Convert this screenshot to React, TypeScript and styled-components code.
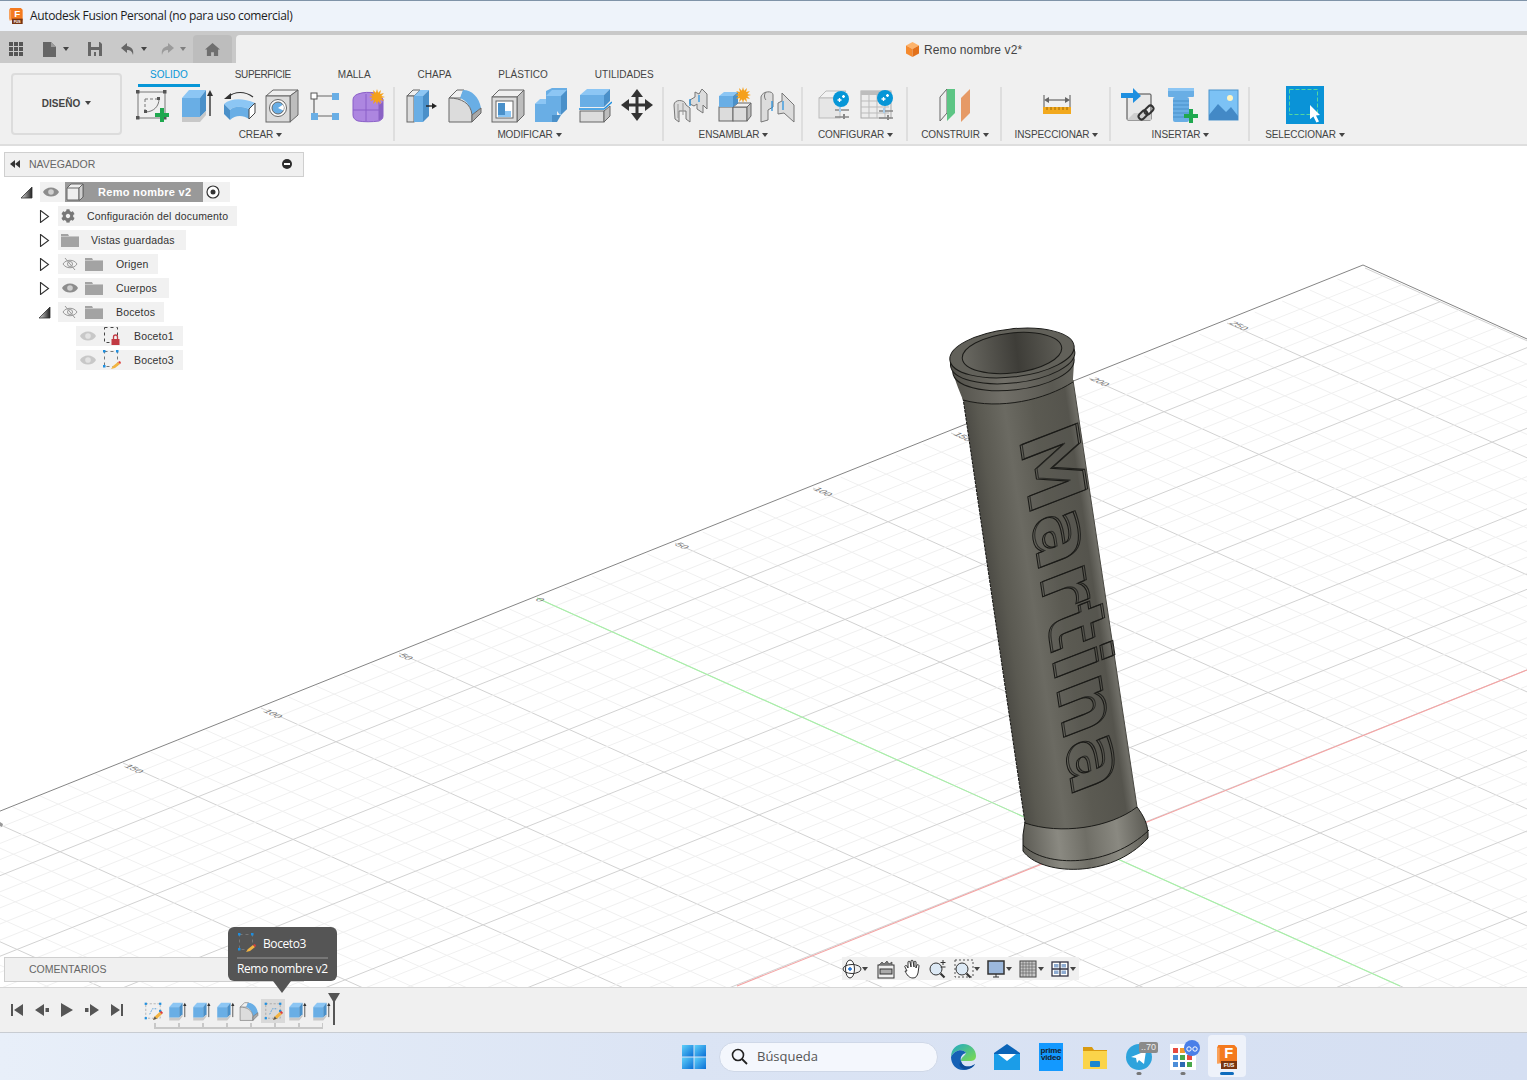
import React from 'react'
import styled, { createGlobalStyle } from 'styled-components'
import { FaCog } from 'react-icons/fa'

const GlobalStyle = createGlobalStyle`
  html, body {
    margin: 0;
    padding: 0;
    background: #fff;
    font-family: "Liberation Sans", Arial, sans-serif;
  }
`

// ---------- icons ----------

const Svg = styled.svg<{ $s?: number }>`
  display: block;
  flex: none;
  width: ${(p) => p.$s ?? 36}px;
  height: ${(p) => p.$s ?? 36}px;
`

type IconProps = { s?: number }
const Ico = ({ s, children }: IconProps & { children: React.ReactNode }) => (
  <Svg $s={s} viewBox="0 0 36 36">
    {children}
  </Svg>
)

const BLUE = '#69aee5'
const LIGHT = '#8cc6f4'
const DEEP = '#4a90c9'
const GREY = '#dcdcdc'
const LINE = '#666'

const Plus = ({ x, y }: { x: number; y: number }) => (
  <path d={`M${x - 2} ${y - 7}h4v5h5v4h-5v5h-4v-5h-5v-4h5z`} fill="#1fa84f" />
)

const Star = ({ x, y, r = 8 }: { x: number; y: number; r?: number }) => {
  const pts = Array.from({ length: 24 }, (_, i) => {
    const a = (i * Math.PI) / 12
    const d = i % 2 ? r * 0.55 : r
    return `${(x + d * Math.cos(a)).toFixed(1)},${(y + d * Math.sin(a)).toFixed(1)}`
  })
  return <polygon points={pts.join(' ')} fill="#f5a11c" />
}

const SketchCreate = ({ s }: IconProps) => (
  <Ico s={s}>
    <rect x="3" y="5" width="27" height="26" fill="none" stroke="#777" />
    {[[1, 3], [28, 3], [1, 29], [28, 29]].map(([x, y]) => (
      <rect key={`${x}${y}`} x={x} y={y} width="3.5" height="3.5" fill="#555" />
    ))}
    <path d="M10 12h14M10 12v13" stroke="#777" strokeDasharray="3 2" fill="none" />
    <path d="M24 12c0 7-5 13-14 13" stroke="#777" fill="none" />
    <rect x="9" y="23" width="3" height="3" fill="#555" />
    <rect x="22" y="10" width="3" height="3" fill="#555" />
    <Plus x={27} y={28} />
  </Ico>
)

const SketchEdit = ({ s }: IconProps) => (
  <Ico s={s}>
    <rect x="5" y="5" width="26" height="26" fill="none" stroke="#888" strokeDasharray="4 3" />
    {[[3, 3], [29, 3], [3, 29], [29, 16]].map(([x, y]) => (
      <rect key={`${x}${y}`} x={x} y={y} width="4" height="4" fill="#1e8fe0" />
    ))}
    <path d="M12 24l5-10h9" stroke="#4a9bdc" strokeDasharray="3 2" fill="none" strokeWidth="1.6" />
    <path d="M18 34l3-6 9-8 4 4-9 8z" fill="#f2b441" />
    <path d="M30 20l3-2 3 3-2 3z" fill="#dd3c3c" />
    <path d="M18 34l3-6 4 4z" fill="#5a5a5a" />
  </Ico>
)

const Extrude = ({ s }: IconProps) => (
  <Ico s={s}>
    <polygon points="4,11 22,11 22,30 4,30" fill={BLUE} />
    <polygon points="4,11 11,3 28,3 22,11" fill={LIGHT} />
    <polygon points="22,11 28,3 28,24 22,30" fill={DEEP} />
    <polygon points="4,30 22,30 28,24 28,28 22,35 4,35" fill="#c8c8c8" />
    <path d="M32 29V6" stroke="#333" strokeWidth="1.4" />
    <polygon points="32,3 35,9 29,9" fill="#333" />
  </Ico>
)

const Revolve = () => (
  <Ico>
    <path d="M3 17C10 11 22 11 34 16L28 22C20 19 13 19 9 23Z" fill={LIGHT} />
    <path d="M9 23C13 19 20 19 28 22V32C22 28 14 28 9 33Z" fill={BLUE} />
    <path d="M3 17L9 23V33L3 27Z" fill={DEEP} />
    <path d="M28 22L34 16V26L28 32Z" fill="#fff" stroke="#444" />
    <path d="M7 10C14 4 24 4 32 10" stroke="#333" strokeWidth="1.2" fill="none" />
    <polygon points="3,12 10,6 10,12" fill="#333" />
  </Ico>
)

const Hole = () => (
  <Ico>
    <polygon points="2,9 9,3 34,3 26,9" fill="#efefef" stroke={LINE} />
    <polygon points="26,9 34,3 34,28 26,35" fill="#bdbdbd" stroke={LINE} />
    <rect x="2" y="9" width="24" height="26" fill={GREY} stroke={LINE} />
    <circle cx="14" cy="21" r="8.5" fill="#fff" stroke={LINE} />
    <circle cx="14" cy="21" r="6" fill={BLUE} stroke={LINE} />
    <path d="M14 21l5 -3.5a6 6 0 0 1 .5 6z" fill="#fff" />
  </Ico>
)

const SketchRect = () => (
  <Ico>
    <path d="M10 9h15M7 12v14M11 29h14" stroke="#666" strokeWidth="1.2" />
    <rect x="4" y="6" width="6" height="6" fill="#fff" stroke="#555" />
    <rect x="25" y="6" width="7" height="7" fill={BLUE} />
    <rect x="4" y="26" width="7" height="7" fill={BLUE} />
    <rect x="25" y="26" width="7" height="7" fill={BLUE} />
  </Ico>
)

const FormIcon = () => (
  <Ico>
    <path d="M8 7c5-2 12-2 17-1l8 6v17c0 3-2 4-4 5-7 1-15 1-21 0-3-1-5-3-5-6V13c0-3 2-5 5-6z" fill="#ad86e0" stroke="#8a5fc8" />
    <path d="M3 23h26M16 7v27M29 14v19" stroke="#8a5fc8" fill="none" />
    <path d="M29 18l4-3v14c0 2-2 4-4 4z" fill="#8a62c4" />
    <Star x={27} y={10} />
  </Ico>
)

const PressPull = () => (
  <Ico>
    <polygon points="3,9 9,3 16,3 10,9" fill="#eee" stroke={LINE} />
    <rect x="3" y="9" width="7" height="26" fill={GREY} stroke={LINE} />
    <polygon points="10,9 16,3 25,3 19,9" fill={LIGHT} />
    <rect x="10" y="9" width="9" height="26" fill={BLUE} />
    <polygon points="19,9 25,3 25,29 19,35" fill={DEEP} />
    <path d="M22 19h8" stroke="#222" strokeWidth="1.4" />
    <polygon points="33,19 28,16 28,22" fill="#222" />
  </Ico>
)

const Fillet = ({ s }: IconProps) => (
  <Ico s={s}>
    <path d="M2 11L10 3H17L14 11Z" fill="#efefef" stroke={LINE} />
    <path d="M16 3C25 3 32 10 34 21L25 28C24 20 20 14 13 11Z" fill={BLUE} />
    <path d="M2 35V11C14 11 24 16 25 28V35Z" fill={GREY} stroke={LINE} />
    <path d="M25 28L34 21V26L25 35Z" fill="#a9a9a9" stroke={LINE} />
  </Ico>
)

const Shell = () => (
  <Ico>
    <polygon points="2,10 9,3 34,3 27,10" fill="#efefef" stroke={LINE} />
    <polygon points="27,10 34,3 34,28 27,35" fill="#bdbdbd" stroke={LINE} />
    <rect x="2" y="10" width="25" height="25" fill={GREY} stroke={LINE} />
    <rect x="6" y="14" width="17" height="17" fill="#fff" stroke={LINE} />
    <polygon points="8,16 15,16 15,24 21,24 21,30 8,30" fill={DEEP} />
    <polygon points="15,24 21,24 21,30 8,30 8,28 15,28" fill={LIGHT} />
  </Ico>
)

const Combine = () => (
  <Ico>
    <polygon points="13,13 13,4 19,1 34,1 34,22 27,28 24,24 24,35 2,35 2,17 7,13" fill={BLUE} />
    <polygon points="13,9 19,3 34,3 28,9" fill={LIGHT} />
    <polygon points="28,9 34,3 34,22 28,28" fill={DEEP} />
    <polygon points="2,17 7,12 13,12 13,17" fill={LIGHT} />
    <polygon points="19,28 28,28 24,35 19,35" fill={DEEP} />
  </Ico>
)

const Split = () => (
  <Ico>
    <rect x="4" y="8" width="24" height="12" fill={BLUE} />
    <polygon points="4,8 11,2 34,2 28,8" fill={LIGHT} />
    <polygon points="28,8 34,2 34,14 28,20" fill={DEEP} />
    <rect x="4" y="24" width="24" height="11" fill={GREY} stroke={LINE} />
    <polygon points="28,24 34,19 34,29 28,35" fill="#bdbdbd" stroke={LINE} />
    <path d="M3 22H28L36 15" stroke="#1e8fe0" strokeWidth="1.4" fill="none" />
  </Ico>
)

const MoveIcon = () => (
  <Ico>
    <path d="M16.500 8h3v8.500H28v3h-8.500V28h-3v-8.500H8v-3h8.500z" fill="#333" />
    <polygon points="18,2 24,10 12,10" fill="#333" />
    <polygon points="18,34 24,26 12,26" fill="#333" />
    <polygon points="2,18 10,12 10,24" fill="#333" />
    <polygon points="34,18 26,12 26,24" fill="#333" />
  </Ico>
)

const JointIcon = () => (
  <Ico>
    <path d="M1 18c0-6 11-6 12 0l4 3v14l-4-3v-8H6v11l-4-3z" fill={GREY} stroke="#777" />
    <path d="M5 17v14M10 16v12" stroke="#999" />
    <path d="M17 13l5-3V5l4 2 3-5 5 5v15l-4-4v8l-6-4v-5l-3 2-4-2z" fill={GREY} stroke="#777" />
    <path d="M17 12v7M26 8v7" stroke="#1e8fe0" strokeWidth="1.2" />
  </Ico>
)

const NewComponent = () => (
  <Ico>
    <rect x="3" y="20" width="14" height="14" fill={GREY} stroke={LINE} />
    <rect x="17" y="20" width="14" height="14" fill={GREY} stroke={LINE} />
    <polygon points="17,20 22,16 35,16 31,20" fill="#efefef" stroke={LINE} />
    <polygon points="31,20 35,16 35,29 31,34" fill="#bdbdbd" stroke={LINE} />
    <rect x="3" y="9" width="14" height="11" fill={BLUE} />
    <polygon points="3,9 8,5 22,5 17,9" fill={LIGHT} />
    <polygon points="17,9 22,5 22,16 17,20" fill={DEEP} />
    <Star x={27} y={8} />
  </Ico>
)

const AsBuiltJoint = () => (
  <Ico>
    <path d="M2 10c1-6 12-7 12-2v12l-5 3v10l-7 2z" fill={GREY} stroke="#777" />
    <path d="M7 5c-2 2-2 6 0 8" stroke="#777" fill="none" />
    <path d="M19 16l4-2V6l12 12v17l-10-9-6 1z" fill={GREY} stroke="#777" />
    <path d="M24 14v9M13 14v10" stroke="#1e8fe0" strokeWidth="1.2" />
  </Ico>
)

const Badge = ({ x, y }: { x: number; y: number }) => (
  <g>
    <circle cx={x} cy={y} r="8" fill="#0696d7" />
    <path d={`M${x - 3.5} ${y + 1}h4M${x - 1.5} ${y - 1}v4M${x + 1} ${y - 2.5}h3M${x + 2.5} ${y - 4}v3`} stroke="#fff" strokeWidth="1.3" />
  </g>
)

const Sliders = ({ x, y }: { x: number; y: number }) => (
  <g>
    <path d={`M${x} ${y}h14M${x} ${y + 7}h14`} stroke="#888" strokeWidth="1.4" />
    <rect x={x + 4} y={y - 3} width="2" height="5" fill="#a9cdea" />
    <rect x={x + 8} y={y + 4} width="2" height="5" fill="#888" />
  </g>
)

const ChangeParams = () => (
  <Ico>
    <polygon points="3,11 10,4 30,4 24,11" fill="#f2f2f2" stroke="#bbb" />
    <rect x="3" y="11" width="21" height="20" fill="#e6e6e6" stroke="#bbb" />
    <Badge x={25} y={12} />
    <Sliders x={19} y={23} />
  </Ico>
)

const ConfigTable = () => (
  <Ico>
    <rect x="2" y="4" width="30" height="27" fill="#ececec" stroke="#aaa" />
    <rect x="2" y="4" width="30" height="4" fill="#bdbdbd" />
    <path d="M2 14h28M2 20h28M2 26h28M10 8v23M18 8v23M26 8v23" stroke="#bbb" />
    <Badge x={26} y={11} />
    <Sliders x={20} y={24} />
  </Ico>
)

const PlaneIcon = () => (
  <Ico>
    <polygon points="3,10 10,2 10,26 3,34" fill="#eee" stroke={LINE} />
    <polygon points="10,2 18,2 18,26 10,34" fill="#5dc584" />
    <polygon points="24,11 33,2 33,26 24,35" fill="#e69a66" />
  </Ico>
)

const Measure = () => (
  <Ico>
    <path d="M5 8v15M31 8v15" stroke="#555" />
    <path d="M8 13h20" stroke="#666" strokeWidth="1.2" />
    <polygon points="5,13 10,10 10,16" fill="#666" />
    <polygon points="31,13 26,10 26,16" fill="#666" />
    <rect x="4" y="20" width="28" height="7" fill="#f2a91e" />
    <path d="M8 20v3M12 20v3M16 20v3M20 20v3M24 20v3M28 20v3" stroke="#a06a00" />
  </Ico>
)

const InsertDerive = () => (
  <Ico>
    <rect x="7" y="7" width="24" height="26" rx="1" fill="#e8e8e8" stroke="#444" />
    <polygon points="7,33 14,26 31,26 31,33" fill="#cfcfcf" />
    <path d="M1 6h12V1l8 8-8 7v-5H1z" fill="#1e8fe0" />
    <g fill="none" stroke="#333" strokeWidth="2">
      <rect x="18" y="25" width="10" height="6" rx="3" transform="rotate(-45 23 28)" />
      <rect x="24" y="20" width="10" height="6" rx="3" transform="rotate(-45 29 23)" />
    </g>
  </Ico>
)

const BoltIcon = () => (
  <Ico>
    <rect x="5" y="1" width="26" height="9" rx="1" fill={BLUE} />
    <rect x="5" y="1" width="26" height="3" fill={LIGHT} />
    <rect x="10" y="10" width="16" height="25" rx="2" fill={BLUE} />
    <path d="M10 14h16M10 18h16M10 22h16M10 26h16M10 30h14" stroke={DEEP} />
    <Plus x={28} y={29} />
  </Ico>
)

const ImageIcon = () => (
  <Ico>
    <rect x="3" y="3" width="29" height="30" fill="#7cc2f5" stroke="#4d94cc" />
    <circle cx="24" cy="11" r="3" fill="#fff4c0" />
    <path d="M3 28l9-11 8 8 5-5 7 9v4H3z" fill="#4389c6" />
  </Ico>
)

const SelectIcon = () => (
  <Svg $s={38} viewBox="0 0 38 38">
    <rect width="38" height="38" fill="#0a93d7" />
    <rect x="3.5" y="3.5" width="28" height="25" fill="none" stroke="#54d6a0" strokeDasharray="4 2" />
    <path d="M24 19l10 10-4 .6 3 6-2.6 1-3-6-3.400 2.600z" fill="#fff" />
  </Svg>
)

const GridDots = () => (
  <Svg $s={14} viewBox="0 0 14 14">
    {[0, 5, 10].flatMap((x) =>
      [0, 5, 10].map((y) => <rect key={`${x}-${y}`} x={x} y={y} width="4" height="4" fill="#555" />),
    )}
  </Svg>
)

const FileIcon = () => (
  <Svg $s={15} viewBox="0 0 15 15">
    <path d="M1 0h8l5 5v10H1z" fill="#666" />
    <path d="M9 0l5 5H9z" fill="#9a9a9a" />
  </Svg>
)

const SaveIcon = () => (
  <Svg $s={14} viewBox="0 0 14 14">
    <path d="M0 0h12l2 2v12H0z" fill="#666" />
    <rect x="3" y="0" width="8" height="5" fill="#c9c9c9" />
    <rect x="3" y="8" width="8" height="6" fill="#c9c9c9" />
    <rect x="6" y="10" width="2" height="4" fill="#666" />
  </Svg>
)

const ArrowBack = ({ flip, color }: { flip?: boolean; color: string }) => (
  <Svg $s={14} viewBox="0 0 14 14" style={flip ? { transform: 'scaleX(-1)' } : undefined}>
    <path d="M6 1L0 6l6 5V8c3 0 5 1 6 5 1-5-1-8-6-9z" fill={color} />
  </Svg>
)

const HomeIcon = () => (
  <Svg $s={15} viewBox="0 0 16 16">
    <path d="M8 1l8 7h-2v7H9.500v-4h-3v4H2V8H0z" fill="#6f6f6f" />
  </Svg>
)

const Cube = () => (
  <Svg $s={15} viewBox="0 0 15 15">
    <polygon points="7.500,0 14,3.500 7.500,7 1,3.500" fill="#fdb36b" />
    <polygon points="1,3.500 7.500,7 7.500,15 1,11.500" fill="#f58a2e" />
    <polygon points="14,3.500 7.500,7 7.500,15 14,11.500" fill="#e2701a" />
  </Svg>
)

const FusionLogo = ({ s = 15 }: IconProps) => (
  <Svg $s={s} viewBox="0 0 30 36">
    <path d="M0 4l2-4h24l4 4v24H6L0 24z" fill="#f47a1f" />
    <path d="M0 4h4v24H0z" fill="#f9a15a" />
    <rect x="6" y="24" width="24" height="12" fill="#7a3510" />
    <text x="11" y="20" fontSize="22" fontWeight="700" fill="#fff" fontFamily="Liberation Sans, sans-serif">F</text>
    <text x="10" y="33" fontSize="8" fontWeight="700" fill="#fff" fontFamily="Liberation Sans, sans-serif">FUS</text>
  </Svg>
)

const Eye = ({ off, faint }: { off?: boolean; faint?: boolean }) => (
  <Svg $s={16} viewBox="0 0 16 16" style={faint ? { opacity: 0.4 } : undefined}>
    {off ? (
      <>
        <path d="M1 8c3-5 11-5 14 0-3 5-11 5-14 0z" fill="none" stroke="#999" />
        <circle cx="8" cy="8" r="2.500" fill="none" stroke="#999" />
        <path d="M3 2l10 12" stroke="#999" />
      </>
    ) : (
      <>
        <path d="M0 8c3-6 13-6 16 0-3 6-13 6-16 0z" fill="#8d8d8d" />
        <circle cx="8" cy="8" r="2.800" fill="#cfcfcf" />
      </>
    )}
  </Svg>
)

const FolderIcon = () => (
  <Svg $s={18} viewBox="0 0 18 14">
    <path d="M0 1h7l1 2h10v11H0z" fill="#a3a3a3" />
    <rect x="0" y="3" width="18" height="1" fill="#c6c6c6" />
  </Svg>
)

const BodyCube = () => (
  <Svg $s={18} viewBox="0 0 18 18">
    <path d="M1 5l4-4h12v13l-3 3H1z" fill="#eee" stroke="#666" />
    <path d="M1 5h12v12M13 5l4-4" fill="none" stroke="#666" />
    <path d="M13 5l4-4v13l-3 3h-1z" fill="#cfcfcf" stroke="#666" />
  </Svg>
)

const SketchLocked = () => (
  <Svg $s={20} viewBox="0 0 20 20">
    <rect x="2.500" y="1.500" width="13" height="15" fill="none" stroke="#444" strokeDasharray="3 3" />
    <path d="M11.500 13v-2a2 2 0 0 1 4 0v2" fill="none" stroke="#c23a43" strokeWidth="1.300" />
    <rect x="9.500" y="13" width="8" height="6" fill="#c23a43" />
  </Svg>
)

const SketchPencil = () => (
  <Svg $s={20} viewBox="0 0 20 20">
    <rect x="2.500" y="1.500" width="13" height="15" fill="none" stroke="#777" strokeDasharray="3 3" />
    <rect x="1" y="0" width="2.500" height="2.500" fill="#1e8fe0" />
    <rect x="14" y="0" width="2.500" height="2.500" fill="#1e8fe0" />
    <rect x="1" y="15" width="2.500" height="2.500" fill="#1e8fe0" />
    <path d="M9 19l2-3 5-4 2 2-5 4z" fill="#f2b441" />
    <path d="M16 12l2-1 1 2-1 1z" fill="#dd3c3c" />
  </Svg>
)

const TargetIcon = () => (
  <Svg $s={14} viewBox="0 0 14 14">
    <circle cx="7" cy="7" r="6" fill="#fff" stroke="#333" strokeWidth="1.200" />
    <circle cx="7" cy="7" r="2.500" fill="#333" />
  </Svg>
)

const TreeOpen = () => (
  <Svg $s={13} viewBox="0 0 13 13">
    <defs>
      <linearGradient id="tri" x1="0" x2="1" y1="0" y2="0">
        <stop offset="0" stopColor="#ddd" />
        <stop offset="1" stopColor="#222" />
      </linearGradient>
    </defs>
    <polygon points="1,12 12,1 12,12" fill="url(#tri)" stroke="#333" strokeWidth=".8" />
  </Svg>
)

const TreeClosed = () => (
  <Svg $s={13} viewBox="0 0 13 13">
    <polygon points="2.500,.500 10.500,6.500 2.500,12.500" fill="#fff" stroke="#333" strokeWidth="1.100" />
  </Svg>
)

const RewindIcon = () => (
  <Svg $s={10} viewBox="0 0 10 8">
    <polygon points="0,4 5,0 5,8" fill="#333" />
    <polygon points="5,4 10,0 10,8" fill="#333" />
  </Svg>
)

const MinusCircle = () => (
  <Svg $s={10} viewBox="0 0 10 10">
    <circle cx="5" cy="5" r="5" fill="#2b2b2b" />
    <rect x="2" y="4" width="6" height="2" fill="#fff" />
  </Svg>
)

const FirstBtn = () => (
  <Svg $s={14} viewBox="0 0 14 14">
    <path d="M1 1h2v12H1zM13 1v12L4 7z" fill="#555" />
  </Svg>
)
const PrevBtn = () => (
  <Svg $s={14} viewBox="0 0 14 14">
    <path d="M9 1v12L0 7zM10.500 5H14v4h-3.500z" fill="#555" />
  </Svg>
)
const PlayBtn = () => (
  <Svg $s={14} viewBox="0 0 14 14">
    <path d="M1 0l12 7-12 7z" fill="#555" />
  </Svg>
)
const NextBtn = () => (
  <Svg $s={14} viewBox="0 0 14 14">
    <path d="M5 1v12l9-6zM0 5h3.500v4H0z" fill="#555" />
  </Svg>
)
const LastBtn = () => (
  <Svg $s={14} viewBox="0 0 14 14">
    <path d="M1 1v12l9-6zM11 1h2v12h-2z" fill="#555" />
  </Svg>
)

const OrbitIcon = () => (
  <Svg $s={20} viewBox="0 0 20 20">
    <ellipse cx="8" cy="10" rx="4.500" ry="9" fill="#fff" stroke="#333" />
    <ellipse cx="10" cy="10" rx="9" ry="4.500" fill="none" stroke="#333" />
    <path d="M6 10h4M8 8v4" stroke="#1e6fd0" strokeWidth="1.400" />
  </Svg>
)
const LookIcon = () => (
  <Svg $s={20} viewBox="0 0 20 20">
    <rect x="2" y="6" width="16" height="13" fill="#eee" stroke="#333" />
    <rect x="4" y="10" width="12" height="5" fill="#aaa" stroke="#333" />
    <path d="M3 6l3-3 2 2 3-3 2 3 3-2v3" fill="#777" stroke="#333" strokeWidth=".6" />
  </Svg>
)
const HandIcon = () => (
  <Svg $s={20} viewBox="0 0 20 20">
    <path d="M5 12L3 8c-1-1 1-2 2-1l1 2V3c0-1 2-1 2 0l1 5V2c0-1 2-1 2 0l1 6V3c0-1 2-1 2 0v6l1-3c1-1 2 0 2 1l-1 7c-1 3-2 5-5 5-4 0-6-3-8-7z" fill="#fff" stroke="#333" />
  </Svg>
)
const ZoomIcon = ({ plus }: { plus?: boolean }) => (
  <Svg $s={20} viewBox="0 0 20 20">
    <circle cx="8" cy="10" r="6" fill="#dce9f5" stroke="#333" />
    <path d="M12.500 14.500l4 4" stroke="#333" strokeWidth="2.200" />
    {plus ? (
      <path d="M15 1v5M12.500 3.500h5M12.500 8h5" stroke="#333" />
    ) : (
      <rect x="1" y="1" width="18" height="17" fill="none" stroke="#555" strokeDasharray="2 2" />
    )}
  </Svg>
)
const DisplayIcon = () => (
  <Svg $s={20} viewBox="0 0 20 20">
    <rect x="2" y="2" width="16" height="13" fill="#9cb8dc" stroke="#333" strokeWidth="1.500" />
    <path d="M7 18h6M10 15v3" stroke="#333" />
  </Svg>
)
const GridIcon = () => (
  <Svg $s={20} viewBox="0 0 20 20">
    <rect x="2" y="2" width="16" height="16" fill="#c6c6c6" stroke="#444" />
    <path d="M5 2v16M8 2v16M11 2v16M14 2v16M2 5h16M2 8h16M2 11h16M2 14h16" stroke="#666" strokeWidth=".7" />
  </Svg>
)
const ViewportIcon = () => (
  <Svg $s={20} viewBox="0 0 20 20">
    <rect x="2" y="3" width="16" height="14" fill="#fff" stroke="#334" strokeWidth="1.300" />
    <path d="M10 3v14M2 10h16" stroke="#334" strokeWidth="1.300" />
    <rect x="4" y="5" width="4.500" height="3.500" fill="#8dabd2" />
    <rect x="11.500" y="5" width="4.500" height="3.500" fill="#8dabd2" />
    <rect x="4" y="11.500" width="4.500" height="3.500" fill="#8dabd2" />
    <rect x="11.500" y="11.500" width="4.500" height="3.500" fill="#8dabd2" />
  </Svg>
)

const WinLogo = () => (
  <Svg $s={24} viewBox="0 0 24 24">
    <defs>
      <linearGradient id="win" x1="0" x2="1" y1="0" y2="1">
        <stop offset="0" stopColor="#5fd0fa" />
        <stop offset="1" stopColor="#0a6fd6" />
      </linearGradient>
    </defs>
    <rect width="11.500" height="11.500" fill="url(#win)" />
    <rect x="12.500" width="11.500" height="11.500" fill="url(#win)" />
    <rect y="12.500" width="11.500" height="11.500" fill="url(#win)" />
    <rect x="12.500" y="12.500" width="11.500" height="11.500" fill="url(#win)" />
  </Svg>
)

const SearchGlass = () => (
  <Svg $s={17} viewBox="0 0 17 17">
    <circle cx="7" cy="7" r="5.500" fill="none" stroke="#222" strokeWidth="1.600" />
    <path d="M11 11l5 5" stroke="#222" strokeWidth="1.800" />
  </Svg>
)

const EdgeIcon = () => (
  <Svg $s={26} viewBox="0 0 26 26">
    <defs>
      <linearGradient id="edgeA" x1="0" x2="1" y1="0" y2="1">
        <stop offset="0" stopColor="#1fa8c8" />
        <stop offset="1" stopColor="#7fdc4c" />
      </linearGradient>
    </defs>
    <path d="M1 13C1 5 7 0 13 0c8 0 13 6 13 12 0 4-3 5-6 5H11c0-4 4-5 5-8-3-5-12-3-15 4z" fill="url(#edgeA)" />
    <path d="M1 13c3-7 12-9 15-4-4 1-6 4-5 8 1 5 7 8 14 3-2 4-7 6-12 6C6 26 1 20 1 13z" fill="#1561b5" />
    <path d="M11 17c1 5 7 8 14 3-2 3-4 4-7 5-6 1-11-3-7-8z" fill="#0d4a98" />
  </Svg>
)

const MailIcon = () => (
  <Svg $s={26} viewBox="0 0 26 26">
    <path d="M0 9L13 0l13 9v15H0z" fill="#0a64b8" />
    <path d="M0 10h26v16H0z" fill="#1b9de8" />
    <path d="M4 10h18l-9 7z" fill="#fff" />
  </Svg>
)

const PrimeIcon = styled.div`
  width: 24px;
  height: 28px;
  background: #1399ff;
  color: #13202e;
  font: 700 8px/7.500px "Liberation Sans", sans-serif;
  letter-spacing: -0.2px;
  text-align: center;
  padding-top: 4px;
  box-sizing: border-box;
`

const TaskFolder = () => (
  <Svg $s={26} viewBox="0 0 26 26">
    <path d="M1 3h9l2 3h13v18H1z" fill="#d99a10" />
    <rect x="1" y="7" width="24" height="18" fill="#fbd44a" />
    <rect x="8" y="17" width="10" height="6" rx="1" fill="#1a86d0" />
  </Svg>
)

const TelegramIcon = () => (
  <Svg $s={26} viewBox="0 0 26 26">
    <circle cx="13" cy="13" r="13" fill="#2ea3dc" />
    <path d="M5 13l15-6-2 13-5-4-2 3-1-5z" fill="#fff" />
  </Svg>
)

const TileIcon = () => (
  <Svg $s={26} viewBox="0 0 26 26">
    <rect width="26" height="26" fill="#fff" />
    {['#e8493f', '#f29a2e', '#49a84a', '#4d8ed8', '#49a84a', '#e8493f', '#4d8ed8', '#2d6bb3', '#49a84a'].map((c, i) => (
      <rect key={i} x={3 + (i % 3) * 7} y={4 + Math.floor(i / 3) * 7} width="5" height="5" fill={c} />
    ))}
  </Svg>
)

const GlassesIcon = () => (
  <Svg $s={16} viewBox="0 0 16 16">
    <circle cx="8" cy="8" r="8" fill="#4a7fe8" />
    <circle cx="5" cy="9" r="2.200" fill="none" stroke="#fff" />
    <circle cx="11" cy="9" r="2.200" fill="none" stroke="#fff" />
  </Svg>
)

// ---------- 3d viewport ----------

const ORIGIN = { x: 537, y: 598 }
const U = { x: 27.6, y: -11 }
const V = { x: 19, y: 8.54 }
const vAt = (k: number) => 3.95 + k
const pt = (i: number, j: number) => ({ x: ORIGIN.x + i * U.x + j * V.x, y: ORIGIN.y + i * U.y + j * V.y })

const uLines = Array.from({ length: 66 }, (_, n) => n - 35)
const vLines = Array.from({ length: 72 }, (_, n) => n - 3)

const GridLines = () => (
  <g>
    {uLines.map((i) => {
      const a = pt(i, 0)
      const b = pt(i, 70)
      return (
        <line
          key={`u${i}`}
          x1={a.x}
          y1={a.y}
          x2={b.x}
          y2={b.y}
          stroke={i % 5 === 0 ? '#d2d2d2' : '#f0f0f0'}
          strokeWidth={1}
        />
      )
    })}
    {vLines.map((k) => {
      const a = pt(-35, vAt(k))
      const b = pt(30, vAt(k))
      return (
        <line
          key={`v${k}`}
          x1={a.x}
          y1={a.y}
          x2={b.x}
          y2={b.y}
          stroke={k % 5 === 0 ? '#d2d2d2' : '#f0f0f0'}
          strokeWidth={1}
        />
      )
    })}
    <line x1={pt(-35, 0).x} y1={pt(-35, 0).y} x2={1363} y2={265} stroke="#858585" />
    <line x1={1363} y1={265} x2={pt(30, 70).x} y2={pt(30, 70).y} stroke="#858585" />
    <line x1={537} y1={598} x2={1400} y2={986} stroke="#a6f2a6" strokeWidth={1.1} />
    <line x1={737} y1={986} x2={1527} y2={670} stroke="#f5a3a3" strokeWidth={1.1} />
    <path d="M0 822l3 2-1 3-2-1z" fill="#999" />
  </g>
)

const gridLabels = [
  ['0', 537, 598],
  ['50', 403, 655],
  ['100', 270, 712],
  ['150', 131, 767],
  ['50', 679, 544],
  ['100', 820, 490],
  ['150', 960, 435],
  ['200', 1097, 380],
  ['250', 1236, 324],
] as const

const GridLabel = styled.text`
  font: 10px "Liberation Sans", sans-serif;
  fill: #777;
  text-anchor: middle;
`

const Lettering = styled.text`
  font: 700 82px "DejaVu Sans", sans-serif;
  letter-spacing: 1.2px;
`

const Remo = () => (
  <g>
    <defs>
      <linearGradient id="body" gradientUnits="userSpaceOnUse" x1="963" y1="400" x2="1073" y2="384">
        <stop offset="0" stopColor="#4c4b45" />
        <stop offset=".12" stopColor="#5a5951" />
        <stop offset=".36" stopColor="#6b6a62" />
        <stop offset=".62" stopColor="#5b5a52" />
        <stop offset=".92" stopColor="#55544d" />
        <stop offset="1" stopColor="#6f6e67" />
      </linearGradient>
      <linearGradient id="flange" gradientUnits="userSpaceOnUse" x1="1023" y1="840" x2="1148" y2="825">
        <stop offset="0" stopColor="#5d5c55" />
        <stop offset=".28" stopColor="#8a8981" />
        <stop offset=".5" stopColor="#6f6e66" />
        <stop offset=".75" stopColor="#8a8981" />
        <stop offset="1" stopColor="#5b5a53" />
      </linearGradient>
      <linearGradient id="neck" gradientUnits="userSpaceOnUse" x1="950" y1="380" x2="1075" y2="365">
        <stop offset="0" stopColor="#52514a" />
        <stop offset=".4" stopColor="#716f68" />
        <stop offset=".8" stopColor="#5a5952" />
        <stop offset="1" stopColor="#66655e" />
      </linearGradient>
      <linearGradient id="hole" x1="0" x2="1" y1="0" y2="0">
        <stop offset="0" stopColor="#6a6962" />
        <stop offset=".55" stopColor="#3e3d38" />
        <stop offset="1" stopColor="#5e5d56" />
      </linearGradient>
    </defs>

    <path d="M1023 835L1023 851C1040 875 1110 880 1148 838C1149 825 1143 815 1137 807L1025 822Z" fill="url(#flange)" stroke="#1b1b18" />
    <path d="M1023 845C1045 868 1110 868 1149 830" fill="none" stroke="#1b1b18" />
    <path d="M963 398L1025 823C1060 835 1110 828 1137 807L1073 380Z" fill="url(#body)" />
    <path d="M963 398L1025 823" fill="none" stroke="#151513" strokeDasharray="3 1" />
    <path d="M1025 823C1060 835 1110 828 1137 807" fill="none" stroke="#1b1b18" />
    <path d="M1073 380L1137 807" fill="none" stroke="#4a4943" />

    <path d="M953 372C956 384 960 392 963 400C1000 410 1045 400 1073 382C1073 375 1074 368 1074 358Z" fill="url(#neck)" />
    <path d="M963 400C1000 410 1045 400 1073 382" fill="none" stroke="#1b1b18" />
    <g transform="rotate(-6.500 1012 353)">
      <ellipse cx="1012" cy="366" rx="61" ry="24" fill="url(#neck)" stroke="#1b1b18" />
      <ellipse cx="1012" cy="359" rx="62.500" ry="24" fill="url(#neck)" stroke="#1b1b18" />
      <ellipse cx="1012" cy="353" rx="62.500" ry="24" fill="#62615a" stroke="#1b1b18" />
      <ellipse cx="1012" cy="353" rx="50" ry="20" fill="url(#hole)" stroke="#1b1b18" />
    </g>

    <Lettering
      transform="matrix(.148 .989 -.93 .36 1021 437)"
      fill="none"
      stroke="#22221f"
      strokeWidth="1.100"
    >
      Martina
    </Lettering>
    <Lettering
      transform="matrix(.148 .989 -.93 .36 1019 438)"
      fill="#5c5b54"
      fillOpacity=".2"
      stroke="#1a1a17"
      strokeWidth="1.100"
    >
      Martina
    </Lettering>
  </g>
)

const Scene = styled.svg`
  display: block;
  width: 1527px;
  height: 841px;
`

// ---------- layout ----------

const Screen = styled.div`
  width: 1527px;
  height: 1080px;
  display: flex;
  flex-direction: column;
  overflow: hidden;
  background: #fff;
`

const TitleBar = styled.div`
  height: 31px;
  box-sizing: border-box;
  flex: none;
  display: flex;
  align-items: center;
  gap: 6px;
  padding: 0 0 1px 8px;
  background: #eef3fa;
  border-top: 1px solid #7f93a8;
  font: 12px "Open Sans", sans-serif;
  letter-spacing: -0.34px;
  color: #1c1c1c;
`

const QuickBar = styled.div`
  height: 32px;
  flex: none;
  display: flex;
  align-items: flex-end;
  background: #c9c9c9;
`

const QuickLeft = styled.div`
  width: 236px;
  flex: none;
  height: 28px;
  display: flex;
  align-items: center;
  padding-left: 9px;
  box-sizing: border-box;
`

const QuickItem = styled.div<{ $left?: number; $faint?: boolean }>`
  display: flex;
  align-items: center;
  gap: 6px;
  margin-left: ${(p) => p.$left ?? 0}px;
  opacity: ${(p) => (p.$faint ? 0.55 : 1)};
`

const Caret = styled.span<{ $w?: number }>`
  display: inline-block;
  flex: none;
  width: 0;
  height: 0;
  border-left: ${(p) => (p.$w ?? 6) / 2}px solid transparent;
  border-right: ${(p) => (p.$w ?? 6) / 2}px solid transparent;
  border-top: ${(p) => ((p.$w ?? 6) * 2) / 3}px solid #444;
`

const HomeTab = styled.div`
  width: 39px;
  height: 28px;
  margin-left: 7px;
  flex: none;
  display: flex;
  align-items: center;
  justify-content: center;
  background: #bdbdbd;
  border-radius: 4px 4px 0 0;
`

const DocTab = styled.div`
  flex: 1;
  height: 28px;
  display: flex;
  align-items: center;
  gap: 4px;
  padding: 1px 0 0 669px;
  box-sizing: border-box;
  background: #f0f0f0;
  border-radius: 4px 0 0 0;
  font-size: 12px;
  letter-spacing: 0.1px;
  color: #444;
`

const Ribbon = styled.div`
  height: 83px;
  flex: none;
  display: flex;
  box-sizing: border-box;
  background: #f0f0f0;
  border-bottom: 2px solid #dedede;
`

const DesignButton = styled.button`
  width: 111px;
  height: 62px;
  margin: 10px 0 0 11px;
  padding: 0 0 2px;
  flex: none;
  display: flex;
  align-items: center;
  justify-content: center;
  gap: 5px;
  background: #f0f0f0;
  border: 2px solid #dcdcdc;
  border-radius: 4px;
  font: 700 10px "Liberation Sans", sans-serif;
  color: #444;
`

const RibbonBody = styled.div`
  margin-left: 4px;
  display: flex;
  flex-direction: column;
`

const TabRow = styled.div`
  height: 20px;
  margin-top: 4px;
  padding-left: 12px;
  display: flex;
  gap: 23px;
`

const Tab = styled.div<{ $active?: boolean; $tight?: boolean }>`
  height: 20px;
  box-sizing: border-box;
  padding: 0 12px;
  line-height: 15px;
  font-size: 10px;
  letter-spacing: ${(p) => (p.$tight ? '-0.4px' : '0')};
  white-space: nowrap;
  color: ${(p) => (p.$active ? '#0696d7' : '#444')};
  border-bottom: 3px solid ${(p) => (p.$active ? '#0696d7' : 'transparent')};
`

const ToolGroups = styled.div`
  display: flex;
`

const ToolGroup = styled.div<{ $w: number; $last?: boolean }>`
  width: ${(p) => p.$w}px;
  height: 54px;
  box-sizing: border-box;
  padding-left: 2px;
  display: flex;
  flex-direction: column;
  align-items: center;
  border-right: 2px solid ${(p) => (p.$last ? 'transparent' : '#dedede')};
`

const ToolIcons = styled.div`
  height: 36px;
  display: flex;
  align-items: center;
  gap: 7px;
`

const GroupLabel = styled.div`
  margin-top: 6px;
  height: 12px;
  display: flex;
  align-items: center;
  gap: 3px;
  font-size: 10px;
  letter-spacing: -0.1px;
  line-height: 12px;
  color: #444;
  white-space: nowrap;
`

const Canvas = styled.div`
  position: relative;
  height: 841px;
  flex: none;
  background: #fff;
`

const Navigator = styled.div`
  position: absolute;
  left: 4px;
  top: 6px;
  width: 300px;
`

const PanelBar = styled.div`
  height: 25px;
  box-sizing: border-box;
  display: flex;
  align-items: center;
  padding: 0 11px 2px 5px;
  background: #f0f0f0;
  border: 1px solid #cfcfcf;
  font-size: 10.5px;
  color: #666;
`

const PanelTitle = styled.span`
  flex: 1;
  margin-left: 9px;
`

const Tree = styled.div`
  margin-top: 3px;
  display: flex;
  flex-direction: column;
`

const TreeRow = styled.div<{ $indent: number }>`
  height: 24px;
  display: flex;
  align-items: center;
  padding-left: ${(p) => p.$indent}px;
`

const TwistSlot = styled.div`
  width: 18px;
  margin-right: 5px;
  flex: none;
  display: flex;
  justify-content: center;
`

const Pill = styled.div<{ $right?: number }>`
  height: 20px;
  display: flex;
  align-items: center;
  padding-right: ${(p) => p.$right ?? 9}px;
  background: #f1f1f1;
  font-size: 10.5px;
  letter-spacing: 0.17px;
  color: #333;
  white-space: nowrap;
`

const Slot = styled.div<{ $w: number }>`
  width: ${(p) => p.$w}px;
  flex: none;
  display: flex;
  align-items: center;
  justify-content: center;
`

const RootLabel = styled.div`
  height: 20px;
  width: 138px;
  margin-left: 3px;
  display: flex;
  align-items: center;
  background: #999;
  color: #fff;
  font-weight: 700;
  font-size: 11px;
  letter-spacing: 0.3px;
  padding-left: 1px;
  box-sizing: border-box;
`

const RootName = styled.span`
  margin-left: 14px;
`

const RowText = styled.span`
  margin-left: 10px;
`

const CommentsBar = styled(PanelBar)`
  position: absolute;
  left: 4px;
  top: 811px;
  width: 300px;
  padding-left: 24px;
`

const Tooltip = styled.div`
  position: absolute;
  z-index: 5;
  left: 228px;
  top: 781px;
  width: 109px;
  height: 54px;
  box-sizing: border-box;
  padding: 5px 9px 0;
  background: #555;
  border-radius: 6px;
  color: #fff;
  font: 12px "Open Sans", sans-serif;
  letter-spacing: -0.4px;

  &::after {
    content: '';
    position: absolute;
    left: 45px;
    top: 54px;
    border-left: 9px solid transparent;
    border-right: 9px solid transparent;
    border-top: 12px solid #555;
  }
`

const TipHead = styled.div`
  height: 22px;
  display: flex;
  align-items: center;
  gap: 6px;
  padding-bottom: 3px;
  border-bottom: 2px solid #777;
`

const TipBody = styled.div`
  margin-top: 1px;
  white-space: nowrap;
`

const ViewBar = styled.div`
  position: absolute;
  left: 842px;
  top: 811px;
  width: 237px;
  height: 23px;
  display: flex;
  align-items: center;
  gap: 6px;
  background: #f0f0f0;
`

const ViewBtn = styled.div<{ $right?: number }>`
  display: flex;
  align-items: center;
  margin-right: ${(p) => p.$right ?? 0}px;
`

const Timeline = styled.div`
  height: 46px;
  flex: none;
  display: flex;
  align-items: center;
  padding-left: 4px;
  box-sizing: border-box;
  background: #f0f0f0;
  border-top: 1px solid #d6d6d6;
  border-bottom: 1px solid #c8ccd2;
`

const PlayCell = styled.div`
  width: 25px;
  display: flex;
  justify-content: center;
`

const Track = styled.div`
  margin-left: 12px;
  margin-top: 8px;
  display: flex;
  flex-direction: column;
`

const TrackCells = styled.div`
  display: flex;
`

const TrackCell = styled.div<{ $on?: boolean }>`
  width: 24px;
  height: 24px;
  display: flex;
  align-items: center;
  justify-content: center;
  background: ${(p) => (p.$on ? '#d9d9d9' : 'transparent')};
`

const Bracket = styled.div`
  width: 169px;
  height: 6px;
  margin-left: 13px;
  box-sizing: border-box;
  border-bottom: 2px solid #c8c8c8;
  background: repeating-linear-gradient(90deg, #c8c8c8 0 2px, transparent 2px 24px);
`

const Marker = styled.div`
  margin: -2px 0 0 -5px;
  position: relative;
  width: 12px;
  height: 32px;
  flex: none;
  display: flex;
  justify-content: center;

  &::before {
    content: '';
    position: absolute;
    top: 0;
    border-left: 6px solid transparent;
    border-right: 6px solid transparent;
    border-top: 10px solid #555;
  }

  &::after {
    content: '';
    width: 2px;
    background: #555;
  }
`

const Taskbar = styled.div`
  height: 47px;
  flex: none;
  display: flex;
  align-items: center;
  padding-left: 672px;
  box-sizing: border-box;
  background: linear-gradient(90deg, #e8eff9 0%, #dbe4f4 45%, #d5dff2 100%);
`

const TaskCell = styled.div<{ $active?: boolean; $dot?: boolean }>`
  position: relative;
  width: 44px;
  height: 47px;
  flex: none;
  display: flex;
  align-items: center;
  justify-content: center;

  ${(p) =>
    p.$active &&
    `
    &::before {
      content: '';
      position: absolute;
      inset: 2px 3px 3px 3px;
      background: #eef2fa;
      border-radius: 4px;
    }
  `}

  & > * {
    position: relative;
  }

  &::after {
    content: '';
    position: absolute;
    display: ${(p) => (p.$active || p.$dot ? 'block' : 'none')};
    bottom: 5px;
    left: 50%;
    width: ${(p) => (p.$active ? 14 : 5)}px;
    height: 3px;
    transform: translateX(-50%);
    border-radius: 2px;
    background: ${(p) => (p.$active ? '#0f6cbd' : '#777')};
  }
`

const SearchBox = styled.div`
  width: 219px;
  height: 30px;
  margin: 0 3px;
  flex: none;
  box-sizing: border-box;
  display: flex;
  align-items: center;
  gap: 9px;
  padding: 0 0 1px 11px;
  background: #f4f7fd;
  border: 1px solid #cfd8e8;
  border-radius: 15px;
  font: 13px "Open Sans", sans-serif;
  color: #555;
`

const TaskBadge = styled.span`
  position: absolute !important;
  top: 9px;
  right: 3px;
  padding: 0 2px;
  background: #8a8a8a;
  border-radius: 2px;
  color: #eee;
  font: 9px/11px "Liberation Sans", sans-serif;
`

const ReadBadge = styled.span`
  position: absolute !important;
  top: 7px;
  right: 5px;
`

const creare = [<SketchCreate />, <Extrude />, <Revolve />, <Hole />, <SketchRect />, <FormIcon />]
const modify = [<PressPull />, <Fillet />, <Shell />, <Combine />, <Split />, <MoveIcon />]
const assemble = [<JointIcon />, <NewComponent />, <AsBuiltJoint />]
const configure = [<ChangeParams />, <ConfigTable />]
const insert = [<InsertDerive />, <BoltIcon />, <ImageIcon />]

const groups: { label: string; w: number; icons: React.ReactNode[]; last?: boolean }[] = [
  { label: 'CREAR', w: 269, icons: creare },
  { label: 'MODIFICAR', w: 269, icons: modify },
  { label: 'ENSAMBLAR', w: 139, icons: assemble },
  { label: 'CONFIGURAR', w: 105, icons: configure },
  { label: 'CONSTRUIR', w: 94, icons: [<PlaneIcon />] },
  { label: 'INSPECCIONAR', w: 109, icons: [<Measure />] },
  { label: 'INSERTAR', w: 139, icons: insert },
  { label: 'SELECCIONAR', w: 110, icons: [<SelectIcon />], last: true },
]

const tabs = ['SOLIDO', 'SUPERFICIE', 'MALLA', 'CHAPA', 'PLÁSTICO', 'UTILIDADES']

const App: React.FC = () => {
  return (
    <Screen>
      <GlobalStyle />
      <TitleBar>
        <FusionLogo s={16} />
        Autodesk Fusion Personal (no para uso comercial)
      </TitleBar>

      <QuickBar>
        <QuickLeft>
          <GridDots />
          <QuickItem $left={19}><FileIcon /><Caret /></QuickItem>
          <QuickItem $left={19}><SaveIcon /></QuickItem>
          <QuickItem $left={19}><ArrowBack color="#666" /><Caret /></QuickItem>
          <QuickItem $left={13} $faint><ArrowBack flip color="#777" /><Caret /></QuickItem>
          <HomeTab><HomeIcon /></HomeTab>
        </QuickLeft>
        <DocTab>
          <Cube />
          Remo nombre v2*
        </DocTab>
      </QuickBar>

      <Ribbon>
        <DesignButton>DISEÑO <Caret /></DesignButton>
        <RibbonBody>
          <TabRow>
            {tabs.map((t, i) => (
              <Tab key={t} $active={i === 0} $tight={t === 'SUPERFICIE'}>{t}</Tab>
            ))}
          </TabRow>
          <ToolGroups>
            {groups.map((g) => (
              <ToolGroup key={g.label} $w={g.w} $last={g.last}>
                <ToolIcons>
                  {g.icons.map((icon, i) => (
                    <React.Fragment key={i}>{icon}</React.Fragment>
                  ))}
                </ToolIcons>
                <GroupLabel>{g.label} <Caret /></GroupLabel>
              </ToolGroup>
            ))}
          </ToolGroups>
        </RibbonBody>
      </Ribbon>

      <Canvas>
        <Scene viewBox="0 146 1527 841">
          <GridLines />
          {gridLabels.map(([t, x, y]) => (
            <GridLabel key={`${t}${x}`} transform={`matrix(.9 .41 -.9 .36 ${x} ${y + 3})`}>{t}</GridLabel>
          ))}
          <Remo />
        </Scene>

        <Navigator>
          <PanelBar>
            <RewindIcon />
            <PanelTitle>NAVEGADOR</PanelTitle>
            <MinusCircle />
          </PanelBar>
          <Tree>
            <TreeRow $indent={13}>
              <TwistSlot><TreeOpen /></TwistSlot>
              <Pill $right={7}>
                <Slot $w={22}><Eye /></Slot>
                <RootLabel>
                  <BodyCube />
                  <RootName>Remo nombre v2</RootName>
                </RootLabel>
                <Slot $w={20}><TargetIcon /></Slot>
              </Pill>
            </TreeRow>
            <TreeRow $indent={31}>
              <TwistSlot><TreeClosed /></TwistSlot>
              <Pill>
                <Slot $w={19}><FaCog size={14} color="#777" /></Slot>
                <RowText>Configuración del documento</RowText>
              </Pill>
            </TreeRow>
            <TreeRow $indent={31}>
              <TwistSlot><TreeClosed /></TwistSlot>
              <Pill $right={11}>
                <Slot $w={23}><FolderIcon /></Slot>
                <RowText>Vistas guardadas</RowText>
              </Pill>
            </TreeRow>
            <TreeRow $indent={31}>
              <TwistSlot><TreeClosed /></TwistSlot>
              <Pill>
                <Slot $w={23}><Eye off /></Slot>
                <Slot $w={25}><FolderIcon /></Slot>
                <RowText>Origen</RowText>
              </Pill>
            </TreeRow>
            <TreeRow $indent={31}>
              <TwistSlot><TreeClosed /></TwistSlot>
              <Pill $right={12}>
                <Slot $w={23}><Eye /></Slot>
                <Slot $w={25}><FolderIcon /></Slot>
                <RowText>Cuerpos</RowText>
              </Pill>
            </TreeRow>
            <TreeRow $indent={31}>
              <TwistSlot><TreeOpen /></TwistSlot>
              <Pill>
                <Slot $w={23}><Eye off /></Slot>
                <Slot $w={25}><FolderIcon /></Slot>
                <RowText>Bocetos</RowText>
              </Pill>
            </TreeRow>
            <TreeRow $indent={72}>
              <Pill>
                <Slot $w={23}><Eye faint /></Slot>
                <Slot $w={25}><SketchLocked /></Slot>
                <RowText>Boceto1</RowText>
              </Pill>
            </TreeRow>
            <TreeRow $indent={72}>
              <Pill>
                <Slot $w={23}><Eye faint /></Slot>
                <Slot $w={25}><SketchPencil /></Slot>
                <RowText>Boceto3</RowText>
              </Pill>
            </TreeRow>
          </Tree>
        </Navigator>

        <CommentsBar>COMENTARIOS</CommentsBar>

        <Tooltip>
          <TipHead>
            <SketchPencil />
            Boceto3
          </TipHead>
          <TipBody>Remo nombre v2</TipBody>
        </Tooltip>

        <ViewBar>
          <ViewBtn $right={2}><OrbitIcon /><Caret /></ViewBtn>
          <ViewBtn><LookIcon /></ViewBtn>
          <ViewBtn><HandIcon /></ViewBtn>
          <ViewBtn><ZoomIcon plus /></ViewBtn>
          <ViewBtn><ZoomIcon /><Caret /></ViewBtn>
          <ViewBtn><DisplayIcon /><Caret /></ViewBtn>
          <ViewBtn><GridIcon /><Caret /></ViewBtn>
          <ViewBtn><ViewportIcon /><Caret /></ViewBtn>
        </ViewBar>
      </Canvas>

      <Timeline>
        <PlayCell><FirstBtn /></PlayCell>
        <PlayCell><PrevBtn /></PlayCell>
        <PlayCell><PlayBtn /></PlayCell>
        <PlayCell><NextBtn /></PlayCell>
        <PlayCell><LastBtn /></PlayCell>
        <Track>
          <TrackCells>
            <TrackCell><SketchEdit s={20} /></TrackCell>
            <TrackCell><Extrude s={20} /></TrackCell>
            <TrackCell><Extrude s={20} /></TrackCell>
            <TrackCell><Extrude s={20} /></TrackCell>
            <TrackCell><Fillet s={20} /></TrackCell>
            <TrackCell $on><SketchEdit s={20} /></TrackCell>
            <TrackCell><Extrude s={20} /></TrackCell>
            <TrackCell><Extrude s={20} /></TrackCell>
          </TrackCells>
          <Bracket />
        </Track>
        <Marker />
      </Timeline>

      <Taskbar>
        <TaskCell><WinLogo /></TaskCell>
        <SearchBox>
          <SearchGlass />
          Búsqueda
        </SearchBox>
        <TaskCell><EdgeIcon /></TaskCell>
        <TaskCell><MailIcon /></TaskCell>
        <TaskCell><PrimeIcon>prime video</PrimeIcon></TaskCell>
        <TaskCell><TaskFolder /></TaskCell>
        <TaskCell $dot><TelegramIcon /><TaskBadge>..70</TaskBadge></TaskCell>
        <TaskCell $dot><TileIcon /><ReadBadge><GlassesIcon /></ReadBadge></TaskCell>
        <TaskCell $active><FusionLogo s={24} /></TaskCell>
      </Taskbar>
    </Screen>
  )
}

export default App
